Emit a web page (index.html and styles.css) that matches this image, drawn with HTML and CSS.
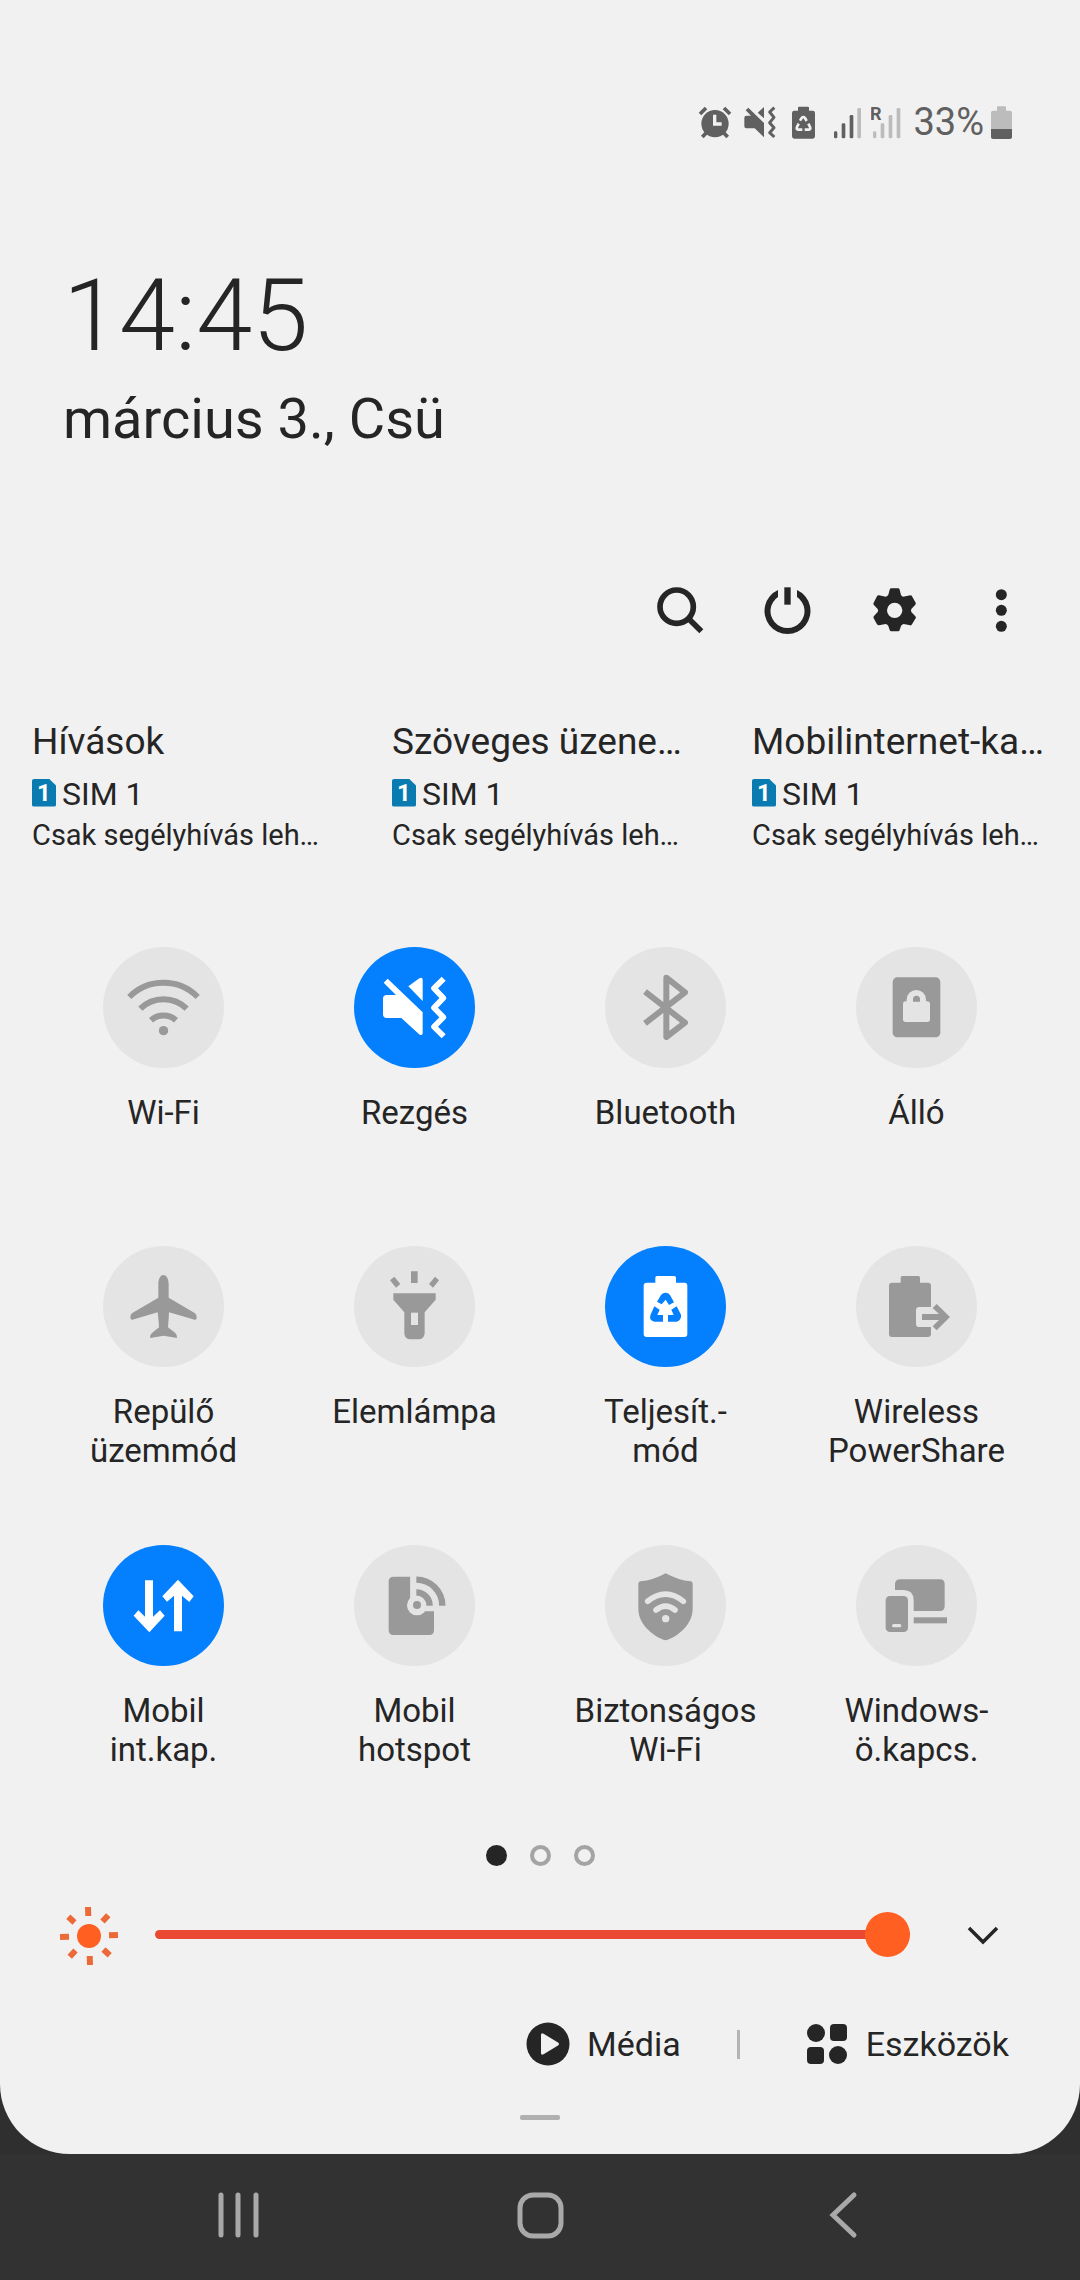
FILE: index.html
```html
<!DOCTYPE html>
<html lang="hu">
<head>
<meta charset="utf-8">
<meta name="viewport" content="width=device-width, initial-scale=1">
<title>Gyorsbeállítások</title>
<link rel="stylesheet" href="styles.css">
</head>
<body>
<main class="panel">
  <div class="status">
    <svg class="status-icon" width="37" height="33" viewBox="48 45 111 99" aria-hidden="true">
      <circle cx="102" cy="98" r="41"/>
      <path class="line-dark" d="M57 69 75 51M147 69 129 51" stroke-width="11"/>
      <path class="line-dark" d="M76 125 64 138M128 125 140 138" stroke-width="11"/>
      <path class="line-panel" d="M101 71V99H122" stroke-width="10"/>
    </svg>
    <svg class="status-icon" width="35" height="33" viewBox="189 45 105 99" aria-hidden="true">
      <path d="M194 58 202 50 249 96V139L221 112H196q-6 0-6-6V80q0-6 6-6H210Z"/>
      <path d="M230 65 249 48V82Z"/>
      <path class="line-dark" d="M280 50 266 63 279 79 266 95 279 110 266 125 280 138" stroke-width="9" stroke-linejoin="round"/>
    </svg>
    <svg class="status-icon" width="28" height="33" viewBox="324 45 84 99" aria-hidden="true">
      <path d="M354 47H381q3 0 3 3V59H395q7 0 7 7V136q0 7-7 7H340q-7 0-7-7V66q0-7 7-7H351V50q0-3 3-3Z"/>
      <path class="line-panel" d="M357 89 362 81q5-6 10 0L377 90M353 98 348 108q-3 7 4 8H364M371 116H383q7-1 4-8L382 98" stroke-width="8"/>
    </svg>
    <svg class="status-icon" width="34" height="33" viewBox="438 45 102 99" aria-hidden="true">
      <rect x="459" y="121" width="10" height="21" rx="4"/>
      <rect x="482" y="97" width="11" height="45" rx="4"/>
      <rect x="506" y="72" width="11" height="70" rx="4"/>
      <rect class="faint" x="529" y="51" width="11" height="91" rx="4"/>
    </svg>
    <svg class="status-icon" width="32" height="49" viewBox="570 21 96 147" aria-hidden="true">
      <g class="faint">
        <rect x="576" y="121" width="10" height="21" rx="4"/>
        <rect x="599" y="97" width="11" height="45" rx="4"/>
        <rect x="623" y="72" width="11" height="70" rx="4"/>
        <rect x="647" y="51" width="11" height="91" rx="4"/>
      </g>
      <text class="roaming" x="567" y="86">R</text>
    </svg>
    <div class="battery">
      <span>33%</span>
      <svg class="status-icon" width="21" height="33" viewBox="933 45 63 99" aria-hidden="true">
        <path class="faint" d="M954 46H975q3 0 3 3V59H990q6 0 6 6V114H933V65q0-6 6-6H951V49q0-3 3-3Z"/>
        <path d="M933 114H996V138q0 6-6 6H939q-6 0-6-6Z"/>
      </svg>
    </div>
  </div>

  <header class="clock">
    <time class="time">14:45</time>
    <div class="date">március 3., Csü</div>
  </header>

  <div class="actions">
    <button class="action" type="button" aria-label="Keresés">
      <svg width="48" height="48" viewBox="78 78 144 144"><circle class="line-ink" cx="140" cy="140" r="50" stroke-width="17"/><path class="line-ink" d="M176 176 214 214" stroke-width="17"/></svg>
    </button>
    <button class="action" type="button" aria-label="Kikapcsolás">
      <svg width="48" height="48" viewBox="399 78 144 144"><path d="M501 90A69 69 0 1 1 444 90V111A51 51 0 1 0 501 111Z"/><rect x="463" y="82" width="19" height="52"/></svg>
    </button>
    <button class="action" type="button" aria-label="Beállítások">
      <svg width="48" height="48" viewBox="720 78 144 144"><path d="M779 89q1-4 5-4h20q4 0 5 4l4 16q2 4 6 5l22-4q4 0 5 3l11 19q1 4-1 6l-12 13q-2 4 0 9l12 13q3 3 1 6l-11 18q-2 4-5 3l-20-4q-6 2-8 6l-4 12q-1 4-5 4h-20q-4 0-5-4l-4-12q-2-5-8-6l-20 4q-4 0-6-3l-10-18q-2-4 1-7l11-12q3-4 0-9l-12-13q-2-3 0-6l10-19q2-4 6-3l20 4q6-2 8-6Z"/><circle class="fill-panel" cx="794" cy="151" r="23"/></svg>
    </button>
    <button class="action" type="button" aria-label="Továbbiak">
      <svg width="48" height="48" viewBox="1041 78 144 144"><circle cx="1114" cy="104" r="16.500"/><circle cx="1114" cy="151" r="16.500"/><circle cx="1114" cy="199" r="16.500"/></svg>
    </button>
  </div>

  <section class="sims">
    <div class="sim">
      <div class="sim-title">Hívások</div>
      <div class="sim-name"><span class="sim-chip">1</span>SIM 1</div>
      <div class="sim-note">Csak segélyhívás leh…</div>
    </div>
    <div class="sim">
      <div class="sim-title">Szöveges üzene…</div>
      <div class="sim-name"><span class="sim-chip">1</span>SIM 1</div>
      <div class="sim-note">Csak segélyhívás leh…</div>
    </div>
    <div class="sim">
      <div class="sim-title">Mobilinternet-ka…</div>
      <div class="sim-name"><span class="sim-chip">1</span>SIM 1</div>
      <div class="sim-note">Csak segélyhívás leh…</div>
    </div>
  </section>

  <section class="tiles">
    <button class="tile" type="button">
      <svg class="disc" viewBox="69 51 363 363" aria-hidden="true">
        <path class="line" d="M148 201A145 145 0 0 1 353 201M181 236A99 99 0 0 1 320 236M213 271A56 56 0 0 1 288 271" stroke-width="18"/>
        <circle cx="250.500" cy="302" r="14"/>
      </svg>
      <span class="label">Wi-Fi</span>
    </button>
    <button class="tile on" type="button">
      <svg class="disc" viewBox="822 51 363 363" aria-hidden="true">
        <path d="M911 158 923 146 1028 247V308q0 10-9 6L964 264H920q-11 0-11-11V206q0-11 11-11H948Z"/>
        <path d="M985 169 1018 145q10-5 10 5V213Z"/>
        <path class="line" d="M1091 146 1062 175 1090 204 1062 233 1090 262 1062 290 1091 319" stroke-width="17" stroke-linejoin="round"/>
      </svg>
      <span class="label">Rezgés</span>
    </button>
    <button class="tile" type="button">
      <svg class="disc" viewBox="75 51 363 363" aria-hidden="true">
        <path class="line" d="M195 185 315 278 259 321V143L315 187 195 280" stroke-width="18" stroke-linejoin="round"/>
      </svg>
      <span class="label">Bluetooth</span>
    </button>
    <button class="tile" type="button">
      <svg class="disc" viewBox="828 51 363 363" aria-hidden="true">
        <rect x="938" y="142" width="143" height="180" rx="14"/>
        <rect class="cut" x="969" y="214" width="81" height="62" rx="8"/>
        <path class="cut" d="M980 216V209A29 29 0 0 1 1038 209V216Z"/>
        <path d="M999 215V208A10 10 0 0 1 1020 208V215Z"/>
      </svg>
      <span class="label">Álló</span>
    </button>

    <button class="tile" type="button">
      <svg class="disc" viewBox="69 48 363 363" aria-hidden="true">
        <path d="M250 135c-10 0-15 14-15 28V203L157 249q-6 5-6 12 0 9 6 8L233 247Q236 270 237 292L217 308q-9 8-6 16L251 317 291 324q2-9-6-16L264 292Q266 270 267 247L344 269q7 1 6-8 0-7-6-12L266 203V163c0-14-5-28-16-28Z"/>
      </svg>
      <span class="label">Repülő<br>üzemmód</span>
    </button>
    <button class="tile" type="button">
      <svg class="disc" viewBox="822 48 363 363" aria-hidden="true">
        <path d="M940 190H1067V209L1034 247V310q-2 18-18 18H992q-18 0-19-18V247L940 209Z"/>
        <rect class="cut" x="993" y="248" width="21" height="37"/>
        <path d="M993 124H1013V159H993ZM930 151 943 140 961 162 948 173ZM1077 151 1065 140 1047 162 1059 173Z"/>
      </svg>
      <span class="label">Elemlámpa</span>
    </button>
    <button class="tile on" type="button">
      <svg class="disc" viewBox="75 48 363 363" aria-hidden="true">
        <path d="M231 138h52q5 0 5 5v15h25q9 0 9 9v145q0 9-9 9H200q-9 0-9-9V167q0-9 9-9h26v-15q0-5 5-5Z"/>
        <path class="cut" d="M231 215 243 195q5-7 14-7 8 0 13 7L282 217 267 225 257 209 245 223ZM223 229 239 239 232 255H249V275H223q-16-3-12-19ZM290 229 303 254q2 17-13 21H264V255H281L274 239Z"/>
      </svg>
      <span class="label">Teljesít.-<br>mód</span>
    </button>
    <button class="tile" type="button">
      <svg class="disc" viewBox="828 48 363 363" aria-hidden="true">
        <path d="M967 138h48q5 0 5 5v15h24q9 0 9 9V231H1018q-10 0-10 10v40q0 10 10 10H1053v21q0 9-9 9H936q-9 0-9-9V167q0-9 9-9h26v-15q0-5 5-5Z"/>
        <path d="M1026 252H1077L1058 234 1070 222 1110 261 1070 301 1058 289 1077 270H1026Z"/>
      </svg>
      <span class="label">Wireless<br>PowerShare</span>
    </button>

    <button class="tile on" type="button">
      <svg class="disc" viewBox="69 44 363 363" aria-hidden="true">
        <path d="M195 150H219V259L240 240 254 256 208 306 161 256 175 240 195 259Z"/>
        <path d="M282 303H306V196L328 215 341 198 294 148 247 198 261 214 282 196Z"/>
      </svg>
      <span class="label">Mobil<br>int.kap.</span>
    </button>
    <button class="tile" type="button">
      <svg class="disc" viewBox="822 44 363 363" aria-hidden="true">
        <path d="M941 139H991V243H1062V300q0 14-14 14H941q-15 0-15-14V153q0-14 15-14Z"/>
        <circle class="cut" cx="1011" cy="225" r="30"/>
        <path class="cut" d="M991 139H1009V226H991Z"/>
        <circle cx="1011" cy="224" r="12"/>
        <path class="line" d="M1009 148A78 78 0 0 1 1087 226M1009 186A40 40 0 0 1 1049 226" stroke-width="19"/>
      </svg>
      <span class="label">Mobil<br>hotspot</span>
    </button>
    <button class="tile" type="button">
      <svg class="disc" viewBox="135 44 363 363" aria-hidden="true">
        <path d="M317 129Q355 150 392 153q6 1 6 8V235C398 285 350 320 317 330 284 320 235 285 235 235V161q0-7 6-8Q280 150 317 129Z"/>
        <path class="line-cut" d="M263 213Q317 170 370 213M288 239Q317 216 345 239" stroke-width="17" stroke-linecap="round"/>
        <circle class="cut" cx="317" cy="265" r="11"/>
      </svg>
      <span class="label">Biztonságos<br>Wi-Fi</span>
    </button>
    <button class="tile" type="button">
      <svg class="disc" viewBox="888 44 363 363" aria-hidden="true">
        <path d="M1021 147H1140q14 0 14 14V228q0 14-14 14H1061V210Q1061 179 1030 179H1005V161q0-14 16-14Z"/>
        <rect x="1061" y="261" width="100" height="18"/>
        <rect x="977" y="197" width="67" height="108" rx="13"/>
        <rect class="cut" x="996" y="281" width="28" height="10" rx="5"/>
      </svg>
      <span class="label">Windows-<br>ö.kapcs.</span>
    </button>
  </section>

  <div class="pages" aria-hidden="true">
    <span class="page current"></span><span class="page"></span><span class="page"></span>
  </div>

  <div class="brightness">
    <svg class="sun" width="60" height="60" viewBox="0 0 60 60" aria-hidden="true">
      <circle cx="30" cy="31" r="12"/>
      <path transform="rotate(-2 30 31)" d="M30 2V11M30 51V60M1 31H10M50 31H59M10 11 16 17M50 11 44 17M10 51 16 45M50 51 44 45" stroke-width="6"/>
    </svg>
    <input class="slider" type="range" min="0" max="100" value="100" aria-label="Fényerő">
    <button class="expand" type="button" aria-label="Továbbiak megjelenítése">
      <svg width="34" height="24" viewBox="0 0 34 24"><path class="line-ink" d="M3 5 17 19 31 5" stroke-width="3.500"/></svg>
    </button>
  </div>

  <div class="shortcuts">
    <button class="shortcut" type="button">
      <svg width="44" height="44" viewBox="0 0 44 44" aria-hidden="true"><circle cx="22" cy="22" r="21.500"/><path class="fill-panel" d="M15 13Q15 10 18 12L32 20.500Q34 22 32 23.500L18 32Q15 34 15 31Z"/></svg>
      Média
    </button>
    <span class="divider"></span>
    <button class="shortcut" type="button">
      <svg width="44" height="44" viewBox="0 0 44 44" aria-hidden="true"><circle cx="11" cy="11" r="9"/><rect x="25" y="2" width="17" height="17" rx="4"/><rect x="2" y="25" width="17" height="17" rx="4"/><circle cx="33" cy="33" r="9"/></svg>
      Eszközök
    </button>
  </div>
  <div class="handle"></div>
</main>

<nav class="navbar">
  <button class="nav-key" type="button" aria-label="Legutóbbiak">
    <svg width="48" height="48" viewBox="0 0 48 48"><path d="M7 4V44M24 4V44M42 4V44" stroke-width="5" stroke-linecap="round"/></svg>
  </button>
  <button class="nav-key" type="button" aria-label="Kezdőlap">
    <svg width="48" height="48" viewBox="0 0 48 48"><rect x="4" y="4" width="41" height="41" rx="13" stroke-width="5"/></svg>
  </button>
  <button class="nav-key" type="button" aria-label="Vissza">
    <svg width="48" height="48" viewBox="0 0 48 48"><path d="M36 4 15 24 36 44" stroke-width="5" stroke-linecap="round"/></svg>
  </button>
</nav>
</body>
</html>
```
FILE: styles.css
```css
:root {
  --panel: #f1f1f1;
  --ink: #252525;
  --status: #606060;
  --faint: #bcbcbc;
  --off: #e4e4e4;
  --off-icon: #999;
  --on: #0480ff;
}

* {
  box-sizing: border-box;
}

body {
  margin: 0;
  min-height: 100vh;
  display: flex;
  flex-direction: column;
  background: #2f2f2f;
  color: var(--ink);
  font-family: Roboto, "Liberation Sans", sans-serif;
}

button {
  margin: 0;
  padding: 0;
  border: 0;
  background: none;
  color: inherit;
  font: inherit;
  cursor: pointer;
}

svg {
  display: block;
  flex: none;
}

.panel {
  padding: 102px 0 34px;
  border-radius: 0 0 70px 70px;
  background: var(--panel);
}

.line-ink {
  fill: none;
  stroke: var(--ink);
}

.fill-panel {
  fill: var(--panel);
}

/* Status bar */
.status {
  display: flex;
  justify-content: flex-end;
  align-items: center;
  gap: 10px;
  height: 40px;
  padding-right: 68px;
  color: var(--status);
}

.status-icon {
  fill: var(--status);
}

.line-dark {
  fill: none;
  stroke: var(--status);
}

.line-panel {
  fill: none;
  stroke: var(--panel);
}

.faint {
  fill: var(--faint);
}

.roaming {
  font-size: 54px;
  font-weight: 700;
}

.battery {
  display: flex;
  align-items: center;
  gap: 7px;
  font-size: 38px;
  line-height: 40px;
}

/* Clock */
.clock {
  padding: 114px 63px 0;
}

.time {
  display: block;
  font-size: 101px;
  font-weight: 300;
  line-height: 120px;
}

.date {
  margin-top: 10px;
  font-size: 56px;
  line-height: 66px;
}

/* Toolbar */
.actions {
  display: flex;
  justify-content: flex-end;
  margin-top: 126px;
  padding-right: 26px;
}

.action {
  display: flex;
  align-items: center;
  justify-content: center;
  width: 107px;
  height: 64px;
  fill: var(--ink);
}

/* SIM summary */
.sims {
  display: grid;
  grid-template-columns: repeat(3, 1fr);
  margin-top: 78px;
}

.sim {
  padding-left: 32px;
  white-space: nowrap;
}

.sim-title {
  font-size: 37px;
  line-height: 44px;
}

.sim-name {
  display: flex;
  align-items: center;
  gap: 6px;
  margin-top: 10px;
  font-size: 32px;
  line-height: 40px;
}

.sim-chip {
  width: 24px;
  height: 28px;
  margin-bottom: 3px;
  border-radius: 2px;
  background: #0a7bb0;
  clip-path: polygon(0 0, 70% 0, 100% 25%, 100% 100%, 0 100%);
  color: #fff;
  font-size: 24px;
  font-weight: 700;
  line-height: 28px;
  text-align: center;
}

.sim-note {
  margin-top: 4px;
  font-size: 29px;
  line-height: 34px;
}

/* Quick tiles */
.tiles {
  display: grid;
  grid-template-columns: repeat(4, 1fr);
  grid-auto-rows: 224px;
  row-gap: 75px;
  margin-top: 95px;
  padding: 0 38px;
}

.tile {
  display: flex;
  flex-direction: column;
  align-items: center;
  gap: 25px;
}

.disc {
  width: 121px;
  height: 121px;
  border-radius: 50%;
  background: var(--off);
  fill: var(--off-icon);
}

.on .disc {
  background: var(--on);
  fill: #fff;
}

.line {
  fill: none;
  stroke: var(--off-icon);
}

.on .line {
  stroke: #fff;
}

.cut {
  fill: var(--off);
}

.on .cut {
  fill: var(--on);
}

.line-cut {
  fill: none;
  stroke: var(--off);
}

.label {
  font-size: 33px;
  line-height: 39px;
  text-align: center;
}

/* Page dots */
.pages {
  display: flex;
  justify-content: center;
  gap: 23px;
  margin-top: 76px;
}

.page {
  width: 21px;
  height: 21px;
  border: 4px solid #a4a4a4;
  border-radius: 50%;
}

.current {
  border-color: var(--ink);
  background: var(--ink);
}

/* Brightness */
.brightness {
  display: flex;
  align-items: center;
  height: 60px;
  margin-top: 39px;
  padding: 0 80px 0 59px;
}

.sun {
  fill: #ff6022;
  stroke: none;
}

.sun path {
  stroke: #ec6a38;
}

.slider {
  flex: 1;
  height: 46px;
  margin: 0 56px 2px 36px;
  appearance: none;
  background: none;
}

.slider::-webkit-slider-runnable-track {
  height: 9px;
  border-radius: 5px;
  background: #ea4833;
}

.slider::-webkit-slider-thumb {
  appearance: none;
  width: 45px;
  height: 45px;
  margin-top: -18px;
  border-radius: 50%;
  background: #ff6022;
}

/* Shortcuts */
.shortcuts {
  display: flex;
  justify-content: flex-end;
  align-items: center;
  margin-top: 57px;
  padding-right: 71px;
}

.shortcut {
  display: flex;
  align-items: center;
  gap: 17px;
  height: 44px;
  font-size: 34px;
  line-height: 40px;
  fill: var(--ink);
}

.divider {
  width: 3px;
  height: 29px;
  margin: 0 65px 0 56px;
  background: #b4b4b4;
}

.handle {
  width: 40px;
  height: 5px;
  margin: 49px auto 0;
  border-radius: 2px;
  background: #b0b0b0;
}

/* System navigation */
.navbar {
  flex: 1;
  display: grid;
  grid-template-columns: repeat(3, 1fr);
  align-items: center;
  min-height: 126px;
  padding: 0 87px 4px;
  background: #323232;
}

.nav-key {
  display: flex;
  align-items: center;
  justify-content: center;
  height: 80px;
  fill: none;
  stroke: #a9a9a9;
}
```
